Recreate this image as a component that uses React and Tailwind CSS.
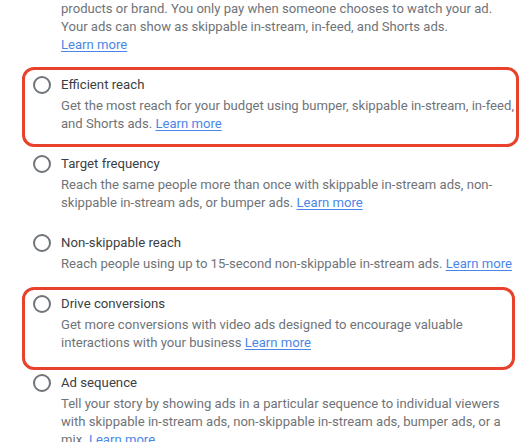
import React from "react";

const Link = () => (
  <a className="text-[#4a86e8] underline underline-offset-2 decoration-1">Learn more</a>
);

function Item({ title, lines }) {
  return (
    <div className="flex">
      <div className="w-[61px] shrink-0 flex justify-end pr-[10px]">
        <div className="mt-[3px] w-[18px] h-[18px] rounded-full border-2 border-[#70757a]" />
      </div>
      <div className="flex flex-col">
        <div className="pt-[2px] text-[13.2px] leading-[20px] text-[#3c4043]">{title}</div>
        <div className="mt-[2px] text-[13.1px] leading-[18px] text-[#6f7377]">
          {lines.map((l, i) => (
            <div key={i} className="whitespace-nowrap">{l}</div>
          ))}
        </div>
      </div>
    </div>
  );
}

export default function App() {
  return (
    <div
      className="relative w-[530px] h-[442px] overflow-hidden bg-white"
      style={{ fontFamily: "Roboto, 'Noto Sans', Arial, sans-serif" }}
    >
      <div className="flex flex-col gap-[19px] mt-[0px]">
        <div className="flex">
          <div className="w-[61px] shrink-0" />
          <div className="text-[13.1px] leading-[18px] text-[#6f7377]">
            <div className="whitespace-nowrap">products or brand. You only pay when someone chooses to watch your ad.</div>
            <div className="whitespace-nowrap">Your ads can show as skippable in-stream, in-feed, and Shorts ads.</div>
            <div className="whitespace-nowrap"><Link /></div>
          </div>
        </div>
        <Item
          title="Efficient reach"
          lines={[
            "Get the most reach for your budget using bumper, skippable in-stream, in-feed,",
            <>and Shorts ads. <Link /></>,
          ]}
        />
        <Item
          title="Target frequency"
          lines={[
            "Reach the same people more than once with skippable in-stream ads, non-",
            <>skippable in-stream ads, or bumper ads. <Link /></>,
          ]}
        />
        <Item
          title="Non-skippable reach"
          lines={[<>Reach people using up to 15-second non-skippable in-stream ads. <Link /></>]}
        />
        <Item
          title="Drive conversions"
          lines={[
            "Get more conversions with video ads designed to encourage valuable",
            <>interactions with your business <Link /></>,
          ]}
        />
        <Item
          title="Ad sequence"
          lines={[
            "Tell your story by showing ads in a particular sequence to individual viewers",
            "with skippable in-stream ads, non-skippable in-stream ads, bumper ads, or a",
            <>mix. <Link /></>,
          ]}
        />
      </div>
      <div className="absolute left-[22px] top-[67px] w-[497px] h-[80px] border-[3.5px] border-[#e8412c] rounded-[12px]" />
      <div className="absolute left-[22px] top-[287px] w-[493px] h-[83px] border-[3.5px] border-[#e8412c] rounded-[12px]" />
    </div>
  );
}
